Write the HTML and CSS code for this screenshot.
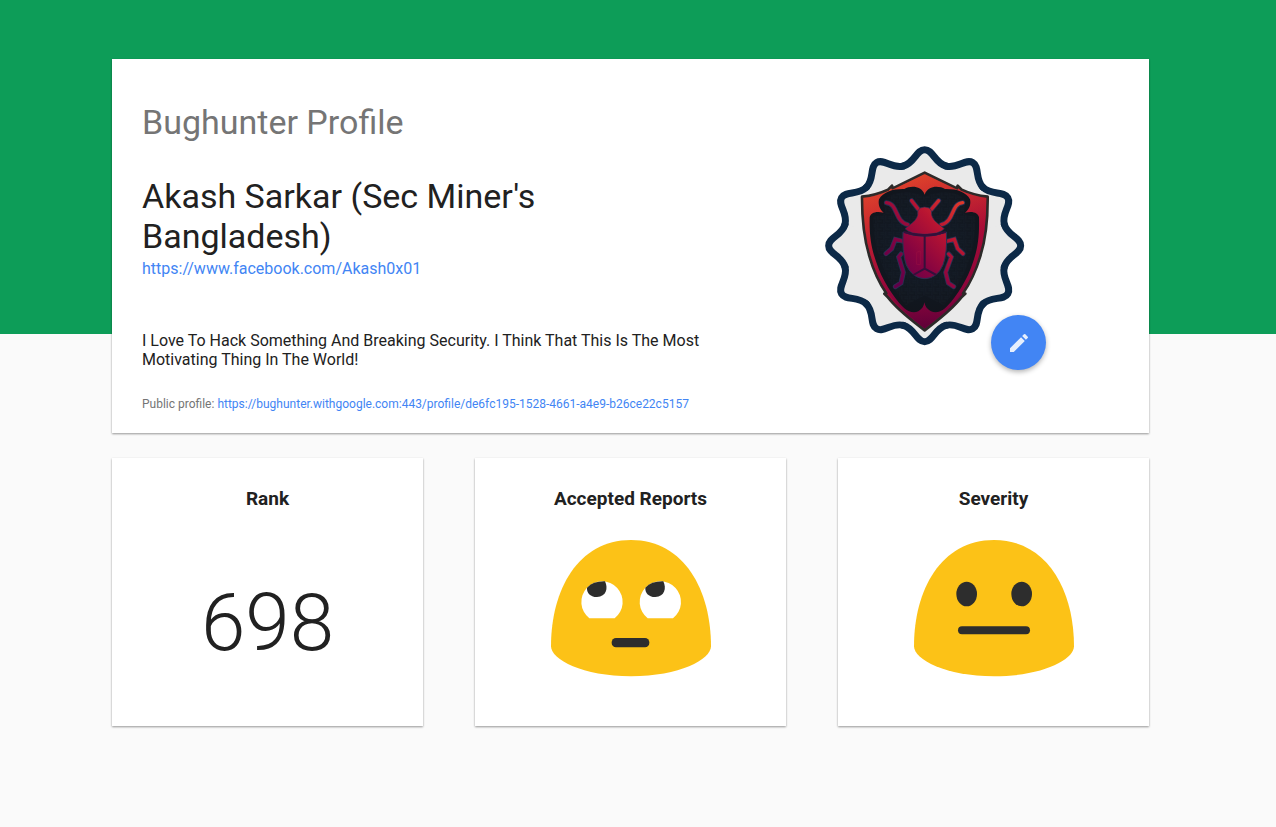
FILE: index.html
```html
<!DOCTYPE html>
<html lang="en">
<head>
<meta charset="utf-8">
<meta name="viewport" content="width=device-width, initial-scale=1">
<title>Bughunter Profile</title>
<link rel="stylesheet" href="styles.css">
</head>
<body>
<main class="page">
  <section class="card profile">
    <div class="profile-text">
      <h1 class="title">Bughunter Profile</h1>
      <h2 class="name">Akash Sarkar (Sec Miner's Bangladesh)</h2>
      <a class="link" href="https://www.facebook.com/Akash0x01">https://www.facebook.com/Akash0x01</a>
      <p class="bio">I Love To Hack Something And Breaking Security. I Think That This Is The Most Motivating Thing In The World!</p>
      <p class="public">Public profile: <a class="link" href="https://bughunter.withgoogle.com:443/profile/de6fc195-1528-4661-a4e9-b26ce22c5157">https://bughunter.withgoogle.com:443/profile/de6fc195-1528-4661-a4e9-b26ce22c5157</a></p>
    </div>
    <div class="avatar">
      <svg class="badge" viewBox="29 32 600 600" role="img" aria-label="Profile badge">
        <defs>
          <linearGradient id="shield" gradientUnits="userSpaceOnUse" x1="170" y1="150" x2="440" y2="560">
            <stop offset="0" stop-color="#e8502a"/><stop offset=".25" stop-color="#cd2e2d"/>
            <stop offset=".6" stop-color="#a00a38"/><stop offset="1" stop-color="#650039"/>
          </linearGradient>
          <linearGradient id="rim" gradientUnits="userSpaceOnUse" x1="0" y1="110" x2="0" y2="585">
            <stop offset="0" stop-color="#e0452b" stop-opacity=".5"/><stop offset=".35" stop-color="#b80f34" stop-opacity=".3"/>
            <stop offset=".75" stop-color="#90053d" stop-opacity=".7"/><stop offset="1" stop-color="#5c0038"/>
          </linearGradient>
          <linearGradient id="bug" gradientUnits="userSpaceOnUse" x1="220" y1="410" x2="440" y2="200">
            <stop offset="0" stop-color="#620049"/><stop offset=".3" stop-color="#850341"/>
            <stop offset=".65" stop-color="#b71432"/><stop offset="1" stop-color="#e0392a"/>
          </linearGradient>
          <radialGradient id="dark" gradientUnits="userSpaceOnUse" cx="328" cy="330" r="210">
            <stop offset="0" stop-color="#111b27"/><stop offset="1" stop-color="#11151c"/>
          </radialGradient>
          <pattern id="weave" width="24" height="24" patternUnits="userSpaceOnUse">
            <path d="M2 4h14M2 10h14M20 0v14M14 14v10M18 18h6M0 18h8" stroke="#283544" stroke-width="1" opacity=".6"/>
          </pattern>
          <path id="lobe" d="M0 0L-64 -239C-30 -248-25 -288 0 -288C25 -288 30 -248 64 -239Z" fill="#eaeaea"/>
          <path id="edge" d="M-64 -239C-30 -248-25 -288 0 -288C25 -288 30 -248 64 -239" fill="none" stroke="#0c2947" stroke-width="21" stroke-linecap="round"/>
        </defs>
        <g transform="translate(328 331)">
          <circle r="240" fill="#eaeaea"/>
          <use href="#lobe"/><use href="#lobe" transform="rotate(30)"/><use href="#lobe" transform="rotate(60)"/><use href="#lobe" transform="rotate(90)"/>
          <use href="#lobe" transform="rotate(120)"/><use href="#lobe" transform="rotate(150)"/><use href="#lobe" transform="rotate(180)"/><use href="#lobe" transform="rotate(210)"/>
          <use href="#lobe" transform="rotate(240)"/><use href="#lobe" transform="rotate(270)"/><use href="#lobe" transform="rotate(300)"/><use href="#lobe" transform="rotate(330)"/>
          <use href="#edge"/><use href="#edge" transform="rotate(30)"/><use href="#edge" transform="rotate(60)"/><use href="#edge" transform="rotate(90)"/>
          <use href="#edge" transform="rotate(120)"/><use href="#edge" transform="rotate(150)"/><use href="#edge" transform="rotate(180)"/><use href="#edge" transform="rotate(210)"/>
          <use href="#edge" transform="rotate(240)"/><use href="#edge" transform="rotate(270)"/><use href="#edge" transform="rotate(300)"/><use href="#edge" transform="rotate(330)"/>
        </g>
        <path d="M328 112L232 159L230 151L218 163Q180 180 140 184Q140 290 162 362Q180 425 213 474L207 475Q216 483 226 496Q255 530 328 585Q401 530 430 496Q440 483 450 475L443 474Q476 425 495 362Q518 290 517 184Q475 180 439 163L427 151L425 159Z" fill="url(#shield)" stroke="#2c2a29" stroke-width="8" stroke-linejoin="round"/>
        <path d="M328 118L232 162Q185 182 144 188Q144 290 166 362Q185 430 219 474Q250 520 328 579Q406 520 438 474Q472 430 491 362Q513 290 513 188Q472 182 424 162Z" fill="url(#rim)"/>
        <path d="M328 178C318 150 285 151 267 161C235 160 203 169 191 192C187 208 195 224 205 232C181 226 165 233 163 246C161 315 172 354 190 400C209 450 247 500 267 519C281 532 298 533 309 528C321 521 326 511 327 501C329 511 334 521 347 528C358 533 375 532 389 519C410 500 447 450 466 400C484 354 493 315 491 246C489 233 473 226 449 232C460 224 468 208 464 192C453 169 421 160 389 161C371 151 338 150 328 178Z" fill="url(#dark)"/>
        <path d="M205 200C220 165 300 165 328 185C365 165 440 165 450 200L445 235L480 245C480 350 450 430 385 510L328 480L272 510C210 430 174 350 174 245L210 235Z" fill="url(#weave)"/>
        <g fill="none" stroke-linecap="round" stroke-linejoin="miter">
          <g stroke="#283153" stroke-width="15">
            <path d="M289 196L309 222M370 196L348 222M213 202C249 205 237 259 277 268M442 202C406 205 418 259 378 268M264 318L240 312L229 340L212 355M393 318L417 312L427 340L443 355M257 356L250 365L264 411L257 443L240 454M400 356L408 365L391 411L399 443L415 454"/>
          </g>
          <g stroke="url(#bug)" stroke-width="10">
            <path d="M289 196L309 222M370 196L348 222M213 202C249 205 237 259 277 268M442 202C406 205 418 259 378 268M264 318L240 312L229 340L212 355M393 318L417 312L427 340L443 355M257 356L250 365L264 411L257 443L240 454M400 356L408 365L391 411L399 443L415 454"/>
          </g>
        </g>
        <path d="M314 218Q328 212 342 218Q351 225 349 239C354 258 371 266 377 272L387 280Q372 297 328 297Q284 297 269 280L279 272C285 266 302 258 307 239Q305 225 314 218Z" fill="url(#bug)" stroke="#283153" stroke-width="2"/>
        <path d="M263 290Q293 303 328 303Q363 303 393 290Q397 352 383 389Q366 429 328 430Q291 429 273 389Q260 352 263 290Z" fill="url(#bug)" stroke="#283153" stroke-width="3"/>
        <path d="M328 302V400M266 290Q328 310 391 290M328 400L294 419M328 400L363 419" fill="none" stroke="#35103b" stroke-width="6"/>
        <path d="M304 351L315 347V388L304 387Z" fill="none" stroke="#a91842" stroke-width="2" opacity=".5"/>
      </svg>
      <button class="edit" type="button" aria-label="Edit profile">
        <svg class="edit-icon" viewBox="0 0 24 24" aria-hidden="true"><path d="M3 17.25V21h3.75L17.81 9.94l-3.75-3.75L3 17.25zM20.71 7.04a1 1 0 0 0 0-1.41l-2.34-2.34a1 1 0 0 0-1.41 0l-1.83 1.83 3.75 3.75 1.83-1.83z"/></svg>
      </button>
    </div>
  </section>
  <section class="stats">
    <article class="card stat">
      <h3 class="stat-title">Rank</h3>
      <div class="rank">698</div>
    </article>
    <article class="card stat">
      <h3 class="stat-title">Accepted Reports</h3>
      <svg class="blob" viewBox="30 29 480 411" role="img" aria-label="Face with rolling eyes">
        <path d="M270 29C110 29 30 180 30 348C30 388 125 438 270 438C415 438 510 388 510 348C510 180 430 29 270 29Z" fill="#fcc217"/>
        <path id="eye" d="M145 264A62 62 0 1 1 221 264Z" fill="#fff"/>
        <path id="pupil" d="M138 172Q157 152 192 153C202 174 196 199 168 200C146 200 137 186 138 172Z" fill="#2d2d2d"/>
        <use href="#eye" x="175"/><use href="#pupil" x="175"/>
        <rect x="212" y="323" width="113" height="28" rx="13" fill="#2d2d2d"/>
      </svg>
    </article>
    <article class="card stat">
      <h3 class="stat-title">Severity</h3>
      <svg class="blob" viewBox="30 29 480 411" role="img" aria-label="Neutral face">
        <path d="M270 29C110 29 30 180 30 348C30 388 125 438 270 438C415 438 510 388 510 348C510 180 430 29 270 29Z" fill="#fcc217"/>
        <ellipse cx="188" cy="191" rx="31" ry="37" fill="#2d2d2d"/>
        <ellipse cx="353" cy="191" rx="31" ry="37" fill="#2d2d2d"/>
        <rect x="162" y="288" width="216" height="24" rx="12" fill="#2d2d2d"/>
      </svg>
    </article>
  </section>
</main>
</body>
</html>
```
FILE: styles.css
```css
* { box-sizing: border-box; }
body {
  margin: 0;
  min-height: 100vh;
  background: linear-gradient(#0d9d58, #0d9d58) 0 0 / 100% 334px no-repeat #fafafa;
  color: #212121;
  font-family: Roboto, "Liberation Sans", sans-serif;
  font-size: 16px;
}
h1, h2, h3, p { margin: 0; font-weight: 400; }
.page {
  display: flex;
  flex-direction: column;
  gap: 25px;
  padding: 59px 127px 40px 112px;
}
.card {
  background: #fff;
  box-shadow: 0 1px 2px rgba(0, 0, 0, .4);
}
.profile {
  display: grid;
  grid-template-columns: 583fr 394fr;
  padding: 43px 30px 17px;
}
.title { color: #757575; font-size: 34px; line-height: 40px; }
.name { margin-top: 34px; font-size: 34px; line-height: 40px; }
.link { color: #4285f4; text-decoration: none; }
.profile-text > .link { display: block; line-height: 26px; }
.bio { margin-top: 49px; line-height: 19px; }
.public { margin-top: 23px; color: #757575; font-size: 12px; line-height: 24px; }
.avatar {
  position: relative;
  justify-self: start;
  align-self: start;
  margin: 44px 0 0 100px;
}
.badge { display: block; width: 200px; height: 200px; }
.edit {
  position: absolute;
  right: -21px;
  bottom: -24px;
  display: grid;
  place-items: center;
  width: 55px;
  height: 55px;
  padding: 0;
  border: 0;
  border-radius: 50%;
  background: #4285f4;
  box-shadow: 0 2px 5px rgba(0, 0, 0, .3);
  cursor: pointer;
}
.edit-icon { width: 24px; height: 24px; fill: #e6effd; }
.stats {
  display: grid;
  grid-template-columns: repeat(3, 1fr);
  gap: 52px;
}
.stat {
  display: flex;
  flex-direction: column;
  align-items: center;
  min-height: 268px;
  padding: 30px 20px;
}
.stat-title { font-size: 19px; font-weight: 700; line-height: 22px; }
.rank { margin-top: 65px; font-size: 80px; font-weight: 300; line-height: 96px; }
.blob { width: 160px; height: 137px; margin-top: 30px; }
```
